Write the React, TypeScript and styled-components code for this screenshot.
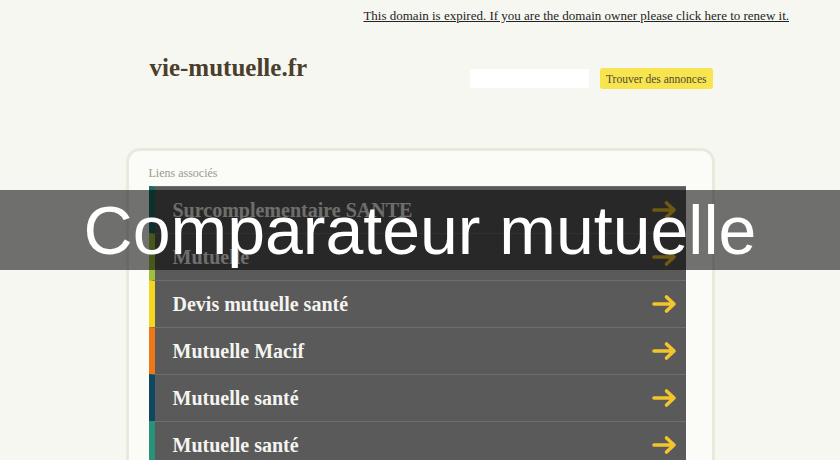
import React from 'react'
import styled, { createGlobalStyle } from 'styled-components'

interface LinkItem {
  label: string
  color: string
}

const links: LinkItem[] = [
  { label: 'Surcomplementaire SANTE', color: '#1b6b60' },
  { label: 'Mutuelle', color: '#9fc03a' },
  { label: 'Devis mutuelle santé', color: '#f5d61f' },
  { label: 'Mutuelle Macif', color: '#ee7718' },
  { label: 'Mutuelle santé', color: '#0e4762' },
  { label: 'Mutuelle santé', color: '#26937a' },
]

const GlobalStyle = createGlobalStyle`
  html, body {
    margin: 0;
    padding: 0;
    background: #f7f7f2;
    font-family: "Liberation Serif", "Times New Roman", serif;
    overflow: hidden;
  }
`

const Page = styled.div`
  position: relative;
  width: 840px;
  height: 460px;
  overflow: hidden;
`

const TopBar = styled.div`
  display: flex;
  justify-content: flex-end;
  height: 30px;
  padding: 7px 51px 0 0;
  box-sizing: border-box;
`

const ExpiredLink = styled.a`
  font-size: 13px;
  line-height: 17px;
  color: #24241e;
  text-decoration: underline;
  cursor: pointer;
`

const Header = styled.div`
  width: 589px;
  margin: 0 auto;
  display: flex;
  justify-content: space-between;
  align-items: flex-start;
  height: 118px;
`

const Logo = styled.div`
  margin: 23px 0 0 24px;
  font-size: 25px;
  line-height: 30px;
  font-weight: bold;
  color: #4b3f2c;
`

const SearchForm = styled.form`
  display: flex;
  align-items: center;
  gap: 11px;
  margin: 38px 2px 0 0;
`

const SearchInput = styled.input`
  width: 119px;
  height: 19px;
  border: none;
  background: #ffffff;
  padding: 0;
  outline: none;
`

const SearchButton = styled.button`
  height: 21px;
  padding: 0 6px;
  border: none;
  border-radius: 3px;
  background: #f8e44f;
  color: #4d4a36;
  font-family: "Liberation Serif", "Times New Roman", serif;
  font-size: 11.5px;
  cursor: pointer;
`

const Panel = styled.div`
  width: 589px;
  box-sizing: border-box;
  margin: 0 auto;
  border: 3px solid #e8eadb;
  border-radius: 14px;
  background: #fbfbf7;
  padding: 15px 26px 0 20px;
  height: 340px;
`

const PanelTitle = styled.div`
  font-size: 12px;
  line-height: 14px;
  color: #9a9a90;
  margin-bottom: 6px;
`

const List = styled.ul`
  list-style: none;
  margin: 0;
  padding: 0;
`

const Row = styled.li<{ $bar: string }>`
  display: flex;
  align-items: center;
  justify-content: space-between;
  height: 47px;
  box-sizing: border-box;
  background: #5a5a5a;
  border-top: 1px solid #6e6e6c;
  border-left: 6px solid ${(p) => p.$bar};
  padding: 0 8px 0 18px;
  cursor: pointer;
`

const RowLabel = styled.span`
  font-size: 20px;
  font-weight: bold;
  color: #f4f4f0;
`

const Banner = styled.div`
  position: absolute;
  left: 0;
  right: 0;
  top: 190px;
  height: 80px;
  background: rgba(0, 0, 0, 0.55);
  display: flex;
  align-items: center;
  justify-content: center;
  font-family: "Liberation Sans", Arial, sans-serif;
  font-size: 68px;
  color: #ffffff;
`

const Arrow = () => (
  <svg width="26" height="20" viewBox="0 0 26 20">
    <path
      d="M2 10 H22 M14.5 3 L22 10 L14.5 17"
      fill="none"
      stroke="#f2c52c"
      strokeWidth="3.6"
      strokeLinecap="round"
      strokeLinejoin="round"
    />
  </svg>
)

export default function App() {
  return (
    <Page>
      <GlobalStyle />
      <TopBar>
        <ExpiredLink>This domain is expired. If you are the domain owner please click here to renew it.</ExpiredLink>
      </TopBar>
      <Header>
        <Logo>vie-mutuelle.fr</Logo>
        <SearchForm onSubmit={(e) => e.preventDefault()}>
          <SearchInput type="text" />
          <SearchButton type="submit">Trouver des annonces</SearchButton>
        </SearchForm>
      </Header>
      <Panel>
        <PanelTitle>Liens associés</PanelTitle>
        <List>
          {links.map((item, index) => (
            <Row key={index} $bar={item.color}>
              <RowLabel>{item.label}</RowLabel>
              <Arrow />
            </Row>
          ))}
        </List>
      </Panel>
      <Banner>Comparateur mutuelle</Banner>
    </Page>
  )
}
